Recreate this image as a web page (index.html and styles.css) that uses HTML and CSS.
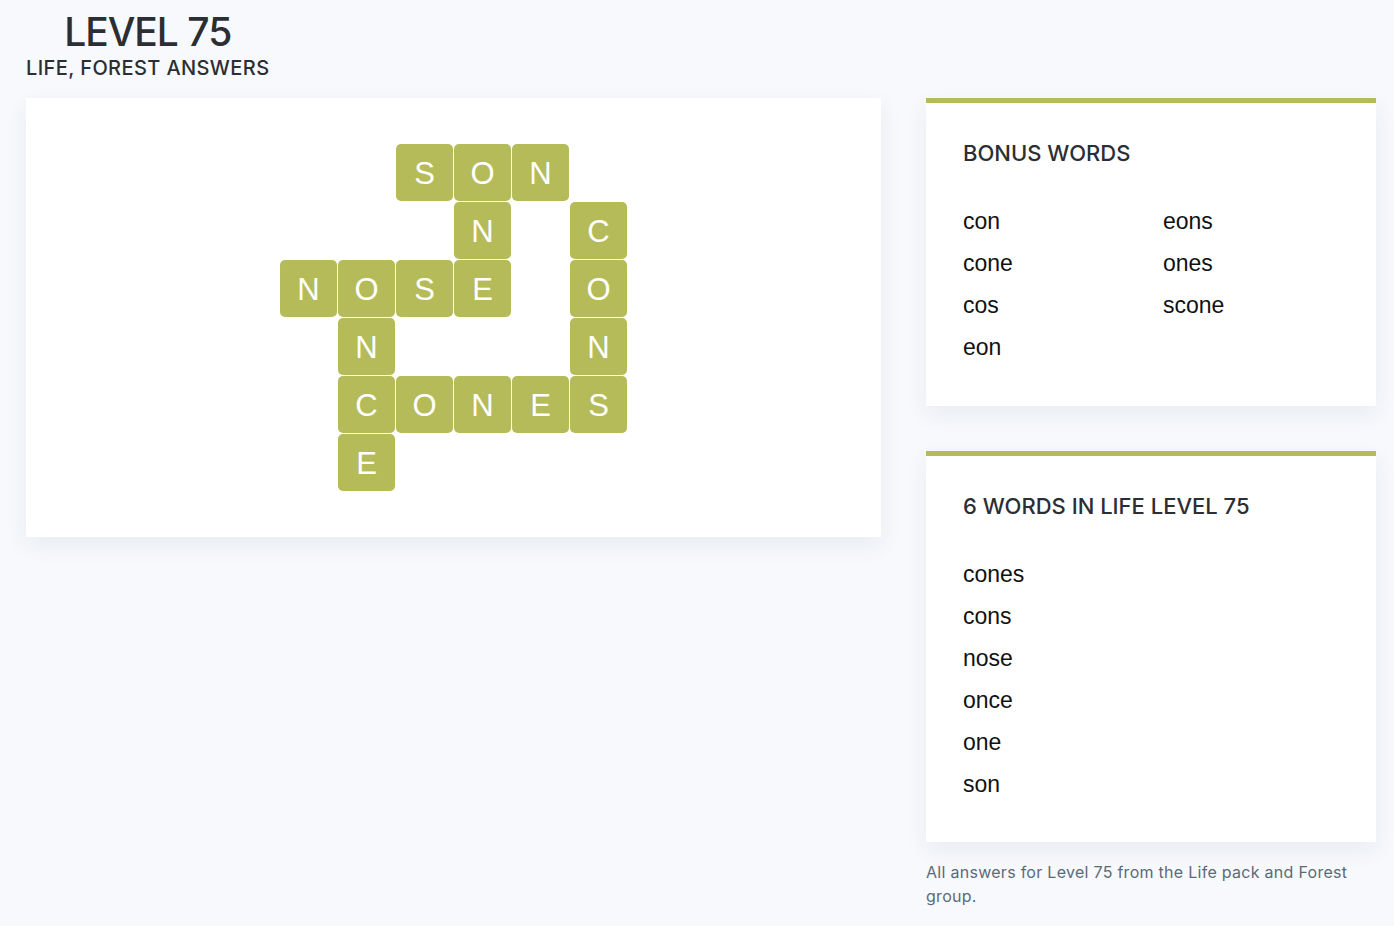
FILE: index.html
```html
<!DOCTYPE html>
<html lang="en">
<head>
<meta charset="utf-8">
<title>Level 75 - Life, Forest Answers</title>
<link rel="stylesheet" href="styles.css">
</head>
<body>
<div class="page">
  <header class="head">
    <h1 class="title">LEVEL 75</h1>
    <div class="subtitle">LIFE, FOREST ANSWERS</div>
  </header>
  <div class="layout">
    <section class="board-card">
      <div class="board">
        <span class="cell"></span><span class="cell"></span><span class="tile">S</span><span class="tile">O</span><span class="tile">N</span><span class="cell"></span>
        <span class="cell"></span><span class="cell"></span><span class="cell"></span><span class="tile">N</span><span class="cell"></span><span class="tile">C</span>
        <span class="tile">N</span><span class="tile">O</span><span class="tile">S</span><span class="tile">E</span><span class="cell"></span><span class="tile">O</span>
        <span class="cell"></span><span class="tile">N</span><span class="cell"></span><span class="cell"></span><span class="cell"></span><span class="tile">N</span>
        <span class="cell"></span><span class="tile">C</span><span class="tile">O</span><span class="tile">N</span><span class="tile">E</span><span class="tile">S</span>
        <span class="cell"></span><span class="tile">E</span><span class="cell"></span><span class="cell"></span><span class="cell"></span><span class="cell"></span>
      </div>
    </section>
    <aside class="side">
      <section class="card card-bonus">
        <h2 class="card-title">BONUS WORDS</h2>
        <ul class="words words-two">
          <li>con</li>
          <li>cone</li>
          <li>cos</li>
          <li>eon</li>
          <li>eons</li>
          <li>ones</li>
          <li>scone</li>
        </ul>
      </section>
      <section class="card">
        <h2 class="card-title">6 WORDS IN LIFE LEVEL 75</h2>
        <ul class="words">
          <li>cones</li>
          <li>cons</li>
          <li>nose</li>
          <li>once</li>
          <li>one</li>
          <li>son</li>
        </ul>
      </section>
      <p class="note">All answers for Level 75 from the Life pack and Forest group.</p>
    </aside>
  </div>
</div>
</body>
</html>
```

FILE: styles.css
```css
* { box-sizing: border-box; }
html, body { margin: 0; padding: 0; }
body {
  background: #f7f9fc;
  font-family: Inter, "Liberation Sans", Arial, sans-serif;
  color: #2b2e33;
}
.page {
  padding: 8px 18px 0 26px;
}
.head {
  display: inline-flex;
  flex-direction: column;
  align-items: center;
}
.title {
  margin: 0;
  font-size: 39px;
  line-height: 48px;
  font-weight: 500;
  letter-spacing: -1px;
  color: #2b2e33;
}
.subtitle {
  font-size: 20px;
  line-height: 24px;
  font-weight: 500;
  letter-spacing: 0.4px;
  color: #2b2e33;
}
.layout {
  margin-top: 18px;
  display: grid;
  grid-template-columns: 855px 450px;
  column-gap: 45px;
  align-items: start;
}
.board-card {
  background: #fff;
  box-shadow: 0 8px 22px rgba(40, 60, 100, 0.07);
  padding: 46px 0;
  display: flex;
  justify-content: center;
}
.board {
  display: grid;
  grid-template-columns: repeat(6, 57px);
  grid-auto-rows: 57px;
  gap: 1px;
}
.tile {
  background: #b5bb59;
  border-radius: 5px;
  color: #fff;
  font-family: "Liberation Sans", Arial, sans-serif;
  font-size: 31px;
  display: flex;
  align-items: center;
  justify-content: center;
  padding-top: 2px;
}
.side {
  display: flex;
  flex-direction: column;
}
.card {
  background: #fff;
  border-top: 5px solid #b5bb59;
  box-shadow: 0 8px 22px rgba(40, 60, 100, 0.07);
  padding: 37px;
}
.card-bonus {
  padding-bottom: 38px;
  margin-bottom: 45px;
}
.card-title {
  margin: 0 0 34px;
  font-size: 22px;
  line-height: 26px;
  font-weight: 500;
  color: #2b2e33;
}
.words {
  list-style: none;
  margin: 0;
  padding: 0;
  font-family: "Liberation Sans", Arial, sans-serif;
  font-size: 23px;
  line-height: 42px;
  color: #111;
}
.words-two {
  display: grid;
  grid-template-columns: 200px 1fr;
  grid-template-rows: repeat(4, 42px);
  grid-auto-flow: column;
}
.note {
  margin: 18px 0 0;
  font-size: 16px;
  line-height: 24px;
  letter-spacing: 0.28px;
  color: #5b6a79;
}
```
